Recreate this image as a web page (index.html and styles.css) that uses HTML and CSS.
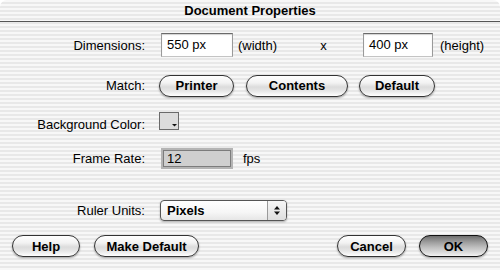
FILE: index.html
```html
<!DOCTYPE html>
<html lang="en">
<head>
    <meta charset="UTF-8">
    <title>Document Properties</title>
    <link rel="stylesheet" href="styles.css">
</head>
<body>
<div class="dialog">
    <div class="title-bar">Document Properties</div>

    <div class="row row-dim">
        <span class="label">Dimensions:</span>
        <div class="field field-w">550 px</div>
        <span class="unit">(width)</span>
        <span class="times">x</span>
        <div class="field field-h">400 px</div>
        <span class="unit unit-h">(height)</span>
    </div>

    <div class="row row-match">
        <span class="label">Match:</span>
        <button class="btn btn-printer">Printer</button>
        <button class="btn btn-contents">Contents</button>
        <button class="btn btn-default">Default</button>
    </div>

    <div class="row row-color">
        <span class="label">Background Color:</span>
        <div class="swatch">
            <svg width="20" height="18" viewBox="0 0 20 18">
                <rect x="1" y="1" width="18" height="16" fill="#dcdcdc"/>
                <path d="M13 12 H18 L15.5 14.5 Z" fill="#111"/>
            </svg>
        </div>
    </div>

    <div class="row row-rate">
        <span class="label">Frame Rate:</span>
        <div class="field field-rate">12</div>
        <span class="fps">fps</span>
    </div>

    <div class="row row-ruler">
        <span class="label">Ruler Units:</span>
        <div class="popup">
            <span class="popup-text">Pixels</span>
            <span class="popup-arrows">
                <svg width="8" height="11" viewBox="0 0 8 11">
                    <path d="M1 4.5 H7 L4 1 Z" fill="#111"/>
                    <path d="M1 6.5 H7 L4 10 Z" fill="#111"/>
                </svg>
            </span>
        </div>
    </div>

    <div class="row row-bottom">
        <button class="btn btn-help">Help</button>
        <button class="btn btn-make">Make Default</button>
        <div class="spacer"></div>
        <button class="btn btn-cancel">Cancel</button>
        <button class="btn btn-ok">OK</button>
    </div>
</div>
</body>
</html>
```

FILE: styles.css
```css
*{
    margin: 0;
    padding: 0;
    box-sizing: border-box;
}
body{
    background: #fff;
    font-family: "Liberation Sans", Arial, sans-serif;
    font-size: 13px;
    color: #000;
}
.dialog{
    width: 500px;
    height: 270px;
    border-radius: 7px 7px 0 0;
    overflow: hidden;
    background: repeating-linear-gradient(to bottom, #f7f7f7 0, #f7f7f7 2px, #e8e8e8 2px, #e8e8e8 4px);
}
.title-bar{
    height: 22px;
    line-height: 21px;
    text-align: center;
    font-weight: bold;
    border-bottom: 1px solid #555;
}

/* rows */
.row{
    display: flex;
    align-items: center;
}
.label{
    width: 145px;
    text-align: right;
    flex-shrink: 0;
}
.row-dim{
    margin-top: 11px;
    height: 24px;
}
.row-match{
    margin-top: 17px;
    height: 23px;
}
.row-color{
    margin-top: 15px;
    height: 22px;
    align-items: flex-start;
}
.row-color .label{
    margin-top: 5px;
    line-height: 15px;
}
.row-rate{
    margin-top: 14px;
    height: 21px;
}
.row-ruler{
    margin-top: 31px;
    height: 21px;
}
.row-bottom{
    margin-top: 14px;
    height: 22px;
    padding: 0 12px;
}
.spacer{
    flex: 1;
}

/* text fields */
.field{
    height: 24px;
    line-height: 22px;
    padding-left: 5px;
    background: #fff;
    border: 1px solid #9a9a9a;
    border-top-color: #6a6a6a;
    border-bottom-color: #c4c4c4;
    box-shadow: inset 0 1px 1px rgba(0,0,0,0.18);
}
.field-w{
    margin-left: 16px;
    width: 72px;
}
.unit{
    margin-left: 5px;
    width: 46px;
}
.times{
    width: 79px;
    text-align: center;
}
.field-h{
    width: 70px;
}
.unit-h{
    margin-left: 7px;
}
.field-rate{
    margin-left: 16px;
    width: 72px;
    height: 21px;
    line-height: 17px;
    padding-left: 4px;
    background: #cfcfcf;
    border: 2px solid #b4b4b4;
    box-shadow: inset 0 0 0 1px #7c7c7c;
}
.fps{
    margin-left: 10px;
}

/* buttons */
.btn{
    height: 22px;
    font-family: "Liberation Sans", Arial, sans-serif;
    font-size: 13px;
    font-weight: bold;
    color: #000;
    border: 1px solid #333;
    border-radius: 11px;
    background: linear-gradient(to bottom, #ffffff 0%, #f2f2f2 35%, #dcdcdc 55%, #e6e6e6 75%, #ffffff 100%);
    box-shadow: 0 1px 2px rgba(0,0,0,0.35);
}
.btn-printer{
    margin-left: 14px;
    width: 75px;
}
.btn-contents{
    margin-left: 12px;
    width: 102px;
}
.btn-default{
    margin-left: 11px;
    width: 76px;
}
.btn-help{
    width: 68px;
}
.btn-make{
    margin-left: 14px;
    width: 105px;
}
.btn-cancel{
    width: 69px;
}
.btn-ok{
    margin-left: 13px;
    width: 69px;
    border-color: #111;
    background: linear-gradient(to bottom, #6e6e6e 0%, #9c9c9c 30%, #bdbdbd 55%, #d9d9d9 80%, #f2f2f2 100%);
}

/* color swatch */
.swatch{
    margin-left: 14px;
    width: 20px;
    height: 18px;
    border: 1px solid #6a6a6a;
    background: #fff;
    line-height: 0;
}
.swatch svg{
    margin: -1px 0 0 -1px;
}

/* popup menu */
.popup{
    margin-left: 15px;
    width: 127px;
    height: 21px;
    display: flex;
    border: 1px solid #555;
    border-radius: 4px;
    background: linear-gradient(to bottom, #ffffff 0%, #f6f6f6 60%, #e6e6e6 100%);
    box-shadow: 0 1px 2px rgba(0,0,0,0.3);
}
.popup-text{
    flex: 1;
    padding-left: 6px;
    line-height: 19px;
    font-weight: bold;
}
.popup-arrows{
    width: 19px;
    border-left: 1px solid #9a9a9a;
    display: flex;
    align-items: center;
    justify-content: center;
    background: linear-gradient(to bottom, #f6f6f6, #dedede);
    border-radius: 0 3px 3px 0;
}
```
